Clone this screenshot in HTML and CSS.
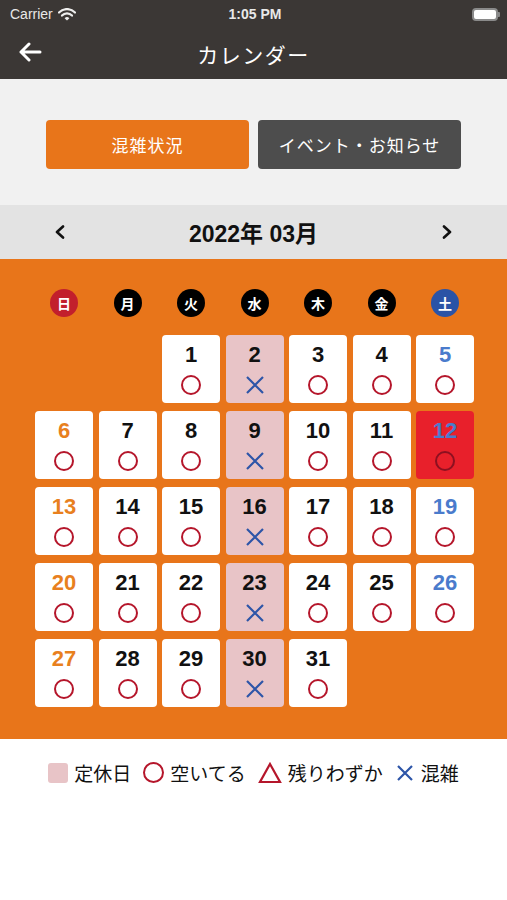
FILE: index.html
```html
<!DOCTYPE html>
<html lang="ja">
<head>
    <meta charset="UTF-8">
    <meta name="viewport" content="width=device-width, initial-scale=1.0">
    <title>カレンダー</title>
    <link rel="stylesheet" href="styles.css">
</head>
<body>
    <div class="header">
        <div class="status-bar">
            <div class="carrier">
                Carrier
                <svg width="18" height="13" viewBox="0 0 18 13">
                    <path d="M1 4.5 A11 11 0 0 1 17 4.5" fill="none" stroke="#eee" stroke-width="2.2" stroke-linecap="round"/>
                    <path d="M4 7.6 A6.8 6.8 0 0 1 14 7.6" fill="none" stroke="#eee" stroke-width="2.2" stroke-linecap="round"/>
                    <path d="M6.6 10.2 L9 12.6 L11.4 10.2 A3.4 3.4 0 0 0 6.6 10.2 Z" fill="#eee"/>
                </svg>
            </div>
            <div class="time">1:05 PM</div>
            <div class="battery"><span class="battery-level"></span></div>
        </div>
        <div class="nav-bar">
            <svg class="back" width="24" height="20" viewBox="0 0 24 20">
                <path d="M22 10 H3 M11 2 L3 10 L11 18" fill="none" stroke="#fff" stroke-width="3" stroke-linecap="round" stroke-linejoin="round"/>
            </svg>
            <div class="nav-title">カレンダー</div>
        </div>
    </div>

    <div class="tabs">
        <button class="tab active">混雑状況</button>
        <button class="tab">イベント・お知らせ</button>
    </div>

    <div class="month-bar">
        <svg class="arrow" width="12" height="14" viewBox="0 0 12 14"><path d="M9 1.5 L3 7 L9 12.5" fill="none" stroke="#111" stroke-width="2.6" stroke-linecap="round" stroke-linejoin="round"/></svg>
        <span class="month-title">2022年 03月</span>
        <svg class="arrow" width="12" height="14" viewBox="0 0 12 14"><path d="M3 1.5 L9 7 L3 12.5" fill="none" stroke="#111" stroke-width="2.6" stroke-linecap="round" stroke-linejoin="round"/></svg>
    </div>

    <div class="calendar">
        <div class="weekdays">
            <span class="wd sun">日</span>
            <span class="wd">月</span>
            <span class="wd">火</span>
            <span class="wd">水</span>
            <span class="wd">木</span>
            <span class="wd">金</span>
            <span class="wd sat">土</span>
        </div>
        <div class="days" id="days"></div>
    </div>

    <div class="legend">
        <span class="legend-item"><span class="swatch"></span>定休日</span>
        <span class="legend-item"><span class="mark-o"></span>空いてる</span>
        <span class="legend-item">
            <svg width="24" height="22" viewBox="0 0 24 22"><path d="M12 2 L22 20 H2 Z" fill="none" stroke="#b5162b" stroke-width="2.2" stroke-linejoin="miter"/></svg>残りわずか
        </span>
        <span class="legend-item">
            <svg width="20" height="20" viewBox="0 0 20 20"><path d="M3 3 L17 17 M17 3 L3 17" stroke="#2d55a8" stroke-width="2.2"/></svg>混雑
        </span>
    </div>

    <script>
        // 2022年3月: 1日は火曜
        const daysEl = document.getElementById('days');
        const firstDay = 2;
        const closed = [2, 9, 16, 23, 30];
        const today = 12;
        const xMark = '<svg width="22" height="22" viewBox="0 0 22 22"><path d="M3 3 L19 19 M19 3 L3 19" stroke="#2d55a8" stroke-width="2.2"/></svg>';

        for (let i = 0; i < firstDay; i++) {
            const blank = document.createElement('div');
            blank.className = 'day blank';
            daysEl.appendChild(blank);
        }
        for (let d = 1; d <= 31; d++) {
            const cell = document.createElement('div');
            const dow = (firstDay + d - 1) % 7;
            cell.className = 'day';
            if (dow === 0) cell.classList.add('sun');
            if (dow === 6) cell.classList.add('sat');
            if (closed.includes(d)) cell.classList.add('closed');
            if (d === today) cell.classList.add('today');
            const mark = closed.includes(d) ? '<span class="mark-x">' + xMark + '</span>' : '<span class="mark-o"></span>';
            cell.innerHTML = '<span class="num">' + d + '</span>' + mark;
            daysEl.appendChild(cell);
        }
    </script>
</body>
</html>
```

FILE: styles.css
```css
/* ベース */
body {
    margin: 0;
    font-family: "Liberation Sans", "Noto Sans CJK JP", sans-serif;
    background: #fff;
    width: 507px;
}

.header {
    background: #3b3735;
    color: #fff;
}

.status-bar {
    height: 28px;
    display: flex;
    align-items: center;
    justify-content: space-between;
    padding: 0 7px 0 10px;
    font-size: 14px;
    color: #e8e8e8;
}

.carrier {
    display: flex;
    align-items: center;
    gap: 5px;
    width: 120px;
}

.time {
    font-weight: bold;
}

.battery {
    width: 120px;
    display: flex;
    justify-content: flex-end;
}

.battery::after {
    content: "";
    width: 2px;
    height: 5px;
    background: #888;
    align-self: center;
    border-radius: 0 1px 1px 0;
}

.battery-level {
    display: block;
    width: 22px;
    height: 9px;
    background: #fff;
    border: 2px solid #8a8a8a;
    border-radius: 4px;
}

.nav-bar {
    height: 51px;
    display: flex;
    align-items: center;
    position: relative;
    justify-content: center;
}

.back {
    position: absolute;
    left: 18px;
    top: 14px;
}

.nav-title {
    font-family: "Noto Sans CJK JP", sans-serif;
    font-size: 21px;
    letter-spacing: 1.5px;
}

/* タブ */
.tabs {
    background: #f1f1f1;
    display: flex;
    justify-content: center;
    gap: 9px;
    padding: 41px 0 36px;
}

.tab {
    width: 203px;
    height: 49px;
    border: none;
    border-radius: 4px;
    background: #4d4d4d;
    color: #fff;
    font-family: "Noto Sans CJK JP", sans-serif;
    font-size: 17px;
    letter-spacing: 1px;
}

.tab.active {
    background: #e8751a;
}

/* 月 */
.month-bar {
    height: 54px;
    background: #e3e3e3;
    display: flex;
    align-items: center;
    justify-content: space-between;
    padding: 0 54px 0 54px;
}

.month-title {
    font-size: 23px;
    font-weight: bold;
    color: #111;
    font-family: "Liberation Sans", "Noto Sans CJK JP", sans-serif;
}

/* カレンダー */
.calendar {
    background: #e8751a;
    padding: 30px 34px 32px 35px;
}

.weekdays,
.days {
    display: grid;
    grid-template-columns: repeat(7, 58px);
    column-gap: 5.5px;
}

.weekdays {
    margin-bottom: 18px;
    justify-items: center;
}

.wd {
    width: 28px;
    height: 28px;
    border-radius: 50%;
    background: #000;
    color: #fff;
    font-family: "Noto Sans CJK JP", sans-serif;
    font-size: 14px;
    font-weight: bold;
    display: flex;
    align-items: center;
    justify-content: center;
}

.wd.sun {
    background: #c21f2c;
}

.wd.sat {
    background: #2a53a6;
}

.days {
    row-gap: 8px;
}

.day {
    height: 68px;
    background: #fff;
    border-radius: 4px;
    display: flex;
    flex-direction: column;
    align-items: center;
    box-sizing: border-box;
    padding-top: 7px;
}

.day.blank {
    background: transparent;
}

.day.closed {
    background: #e8c4c7;
}

.day.today {
    background: #e8202b;
}

.num {
    font-size: 22px;
    font-weight: bold;
    line-height: 26px;
    color: #111;
    margin-bottom: 7px;
}

.day.sun .num {
    color: #e8801e;
}

.day.sat .num,
.day.today .num {
    color: #4a7bcc;
}

.mark-o {
    display: block;
    width: 16px;
    height: 16px;
    border: 2px solid #b5162b;
    border-radius: 50%;
}

.day.today .mark-o {
    border-color: #8d1020;
}

.mark-x {
    display: block;
    height: 22px;
    margin-top: -1px;
}

/* 凡例 */
.legend {
    display: flex;
    justify-content: center;
    align-items: center;
    gap: 12px;
    padding: 20px 0;
    font-family: "Noto Sans CJK JP", sans-serif;
    font-size: 19px;
    color: #111;
}

.legend-item {
    display: flex;
    align-items: center;
    gap: 6px;
}

.swatch {
    width: 20px;
    height: 20px;
    border-radius: 3px;
    background: #e8c4c7;
}

.legend .mark-o {
    width: 17px;
    height: 17px;
}
```
